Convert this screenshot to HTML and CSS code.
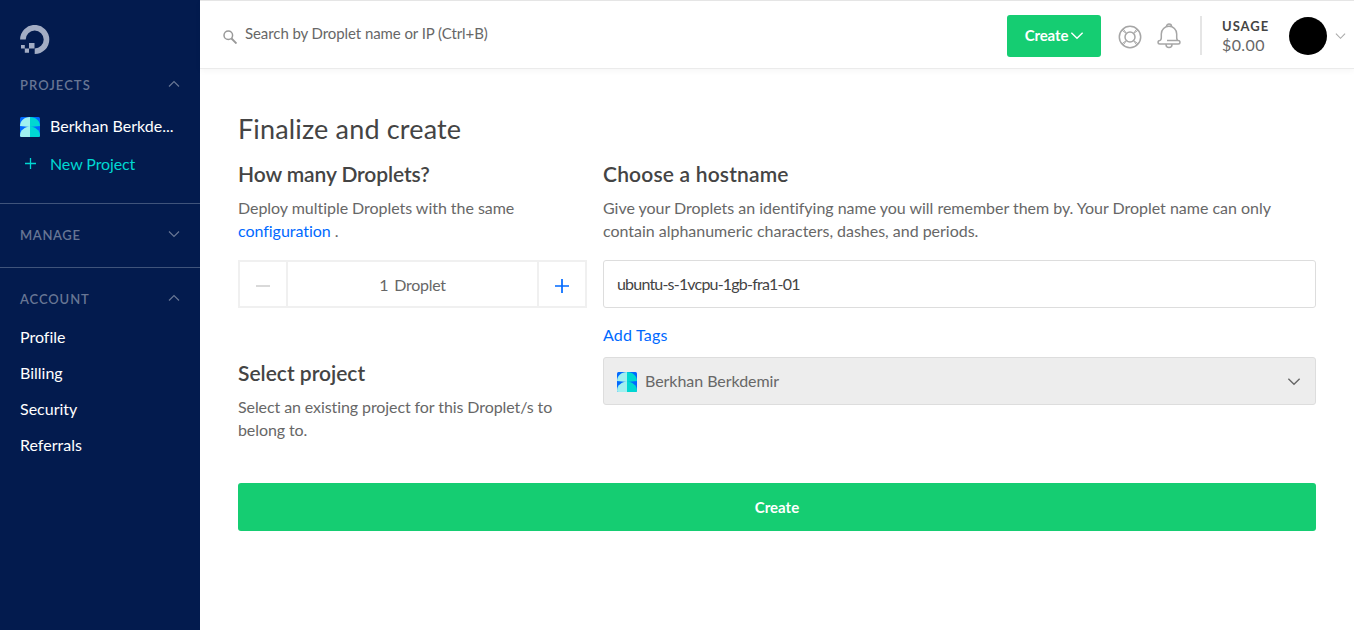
FILE: index.html
```html
<!DOCTYPE html>
<html lang="en">
<head>
<meta charset="utf-8">
<title>Create Droplets</title>
<link rel="stylesheet" href="styles.css">
</head>
<body>
<svg class="defs" aria-hidden="true">
  <symbol id="project" viewBox="0 0 20 20">
    <rect width="20" height="20" rx="1.5" fill="#0069ff"/>
    <path d="M10 0C4 0 0 4 0 9l10 1z" fill="#a0f0f0"/>
    <path d="M10 0c6 0 10 4 10 9l-10 1z" fill="#00d7d2"/>
    <path d="M10 9.500C5 10 0 13 0 18.500Q0 20 1.500 20H10z" fill="#a0f0f0"/>
    <path d="M10 9.500c5 .5 10 3.500 10 9q0 1.500-1.500 1.500H10z" fill="#00d7d2"/>
  </symbol>
  <symbol id="chevron" viewBox="0 0 12 8">
    <path d="M1 1.500l5 5 5-5" fill="none" stroke="currentColor" stroke-width="1.200"/>
  </symbol>
</svg>
<div class="app">
  <nav class="sidebar">
    <svg class="logo" viewBox="0 0 30 30">
      <path d="M2.900 14.500A11.800 11.800 0 1 1 14.700 26.300" fill="none" stroke="#a3adc4" stroke-width="5.600"/>
      <path d="M9 18h5.500v5.500H9zM4.800 23.500H9v4.200H4.800zM1 20h3.800v3.500H1z" fill="#a3adc4"/>
    </svg>
    <div class="group projects">
      <div class="group-head"><span class="t-projects">PROJECTS</span><svg class="chev up"><use href="#chevron"/></svg></div>
      <a class="project"><svg class="project-icon"><use href="#project"/></svg><span class="t-name">Berkhan Berkde...</span></a>
      <a class="project new"><svg class="plus" viewBox="0 0 20 20"><path d="M10.500 5v11M5 10.500h11" stroke="currentColor" stroke-width="1.300"/></svg><span class="t-new">New Project</span></a>
    </div>
    <div class="group manage">
      <div class="group-head"><span class="t-manage">MANAGE</span><svg class="chev"><use href="#chevron"/></svg></div>
    </div>
    <div class="group account">
      <div class="group-head"><span class="t-account">ACCOUNT</span><svg class="chev up"><use href="#chevron"/></svg></div>
      <a class="link">Profile</a>
      <a class="link">Billing</a>
      <a class="link">Security</a>
      <a class="link">Referrals</a>
    </div>
  </nav>
  <div class="page">
    <header class="topbar">
      <svg class="search-icon" viewBox="0 0 14 14"><circle cx="5.300" cy="5.300" r="4.300" fill="none" stroke="#999" stroke-width="1.500"/><path d="M8.500 8.500l5 5" stroke="#999" stroke-width="1.900"/></svg>
      <span class="search">Search by Droplet name or IP (Ctrl+B)</span>
      <button class="create-menu"><span>Create</span><svg class="menu-chev"><use href="#chevron"/></svg></button>
      <svg class="help" viewBox="0 0 24 24" fill="none" stroke="#a6a6a6" stroke-width="1.500"><circle cx="12" cy="12" r="10.700"/><circle cx="12" cy="12" r="5"/><path d="M4 5.200l4.200 3.200M5.200 4l3.200 4.200M20 5.200l-4.200 3.200M18.800 4l-3.200 4.200M4 18.800l4.200-3.200M5.200 20l3.200-4.200M20 18.800l-4.200-3.200M18.800 20l-3.200-4.200" stroke-width="1"/></svg>
      <svg class="bell" viewBox="0 0 24 26" fill="none" stroke="#a6a6a6" stroke-width="1.500"><path d="M9.500 3.500a2.500 2.500 0 0 1 5 0M10 17.500h11.200a1.700 1.700 0 0 1 0 3.500H2.800a1.700 1.700 0 0 1 0-3.500q1.500-.3 1.500-3v-3.500a7.700 7.700 0 0 1 15.400 0v3.500q0 2.700 1.500 3M9 21.500a3 3 0 0 0 6 0"/></svg>
      <div class="usage"><span class="usage-label">USAGE</span><span class="usage-value">$0.00</span></div>
      <span class="avatar"></span>
      <svg class="user-chev"><use href="#chevron"/></svg>
    </header>
    <main class="content">
      <h1>Finalize and create</h1>
      <div class="columns">
        <section class="left">
          <h2 class="t-how">How many Droplets?</h2>
          <p class="t-deploy">Deploy multiple Droplets with the same<br><a class="blue">configuration</a> .</p>
          <div class="stepper">
            <span class="step minus"><svg viewBox="0 0 14 14"><path d="M0 7h14" stroke="currentColor" stroke-width="1.500"/></svg></span>
            <span class="count"><span>1</span><span>Droplet</span></span>
            <span class="step add"><svg viewBox="0 0 14 14"><path d="M0 7h14M7 0v14" stroke="currentColor" stroke-width="1.700"/></svg></span>
          </div>
          <h2 class="t-select">Select project</h2>
          <p class="t-existing">Select an existing project for this Droplet/s to<br>belong to.</p>
        </section>
        <section class="right">
          <h2 class="t-host">Choose a hostname</h2>
          <p class="t-give">Give your Droplets an identifying name you will remember them by. Your Droplet name can only<br>contain alphanumeric characters, dashes, and periods.</p>
          <div class="field">ubuntu-s-1vcpu-1gb-fra1-01</div>
          <a class="tags blue">Add Tags</a>
          <div class="select"><svg class="project-icon"><use href="#project"/></svg><span class="select-name">Berkhan Berkdemir</span><svg class="select-chev"><use href="#chevron"/></svg></div>
        </section>
      </div>
      <button class="create">Create</button>
    </main>
  </div>
</div>
</body>
</html>
```
FILE: styles.css
```css
* { box-sizing: border-box; }
body {
  margin: 0;
  font: 16px/23px Lato, "Open Sans", sans-serif;
  font-variant-ligatures: none;
  color: #676767;
  background: #fff;
}
h1, h2, p { margin: 0; }
svg { display: block; flex: none; }
button { border: 0; padding: 0; font: inherit; }
.defs { position: absolute; width: 0; height: 0; }
.app { display: flex; height: 630px; overflow: hidden; white-space: nowrap; }

.sidebar { width: 200px; flex: none; background: #031b4e; color: #fff; }
.logo { width: 30px; height: 30px; margin: 25px 0 0 20px; }
.group { padding: 0 20px; }
.group-head {
  display: flex;
  align-items: center;
  justify-content: space-between;
  height: 20px;
  font-size: 13px;
  font-weight: 600;
  color: #687694;
}
.group-head span { padding-top: 2px; }
.t-projects { letter-spacing: 1.05px; }
.t-manage { letter-spacing: .65px; }
.t-account { letter-spacing: .9px; }
.chev { width: 12px; height: 8px; }
.up { transform: rotate(180deg); }
.projects { height: 148px; padding-top: 19px; }
.project { display: flex; align-items: center; gap: 10px; height: 38px; }
.project span { margin-top: -3px; }
.t-new { letter-spacing: -.1px; }
.projects .group-head { margin-bottom: 14px; }
.project-icon, .plus { width: 20px; height: 20px; }
.new { color: #00d7d2; }
.plus { margin-top: -4px; }
.manage { height: 64px; padding-top: 20px; border-top: 1px solid #40547b; }
.account { padding-top: 20px; border-top: 1px solid #40547b; }
.account .group-head { margin-bottom: 10px; }
.link { display: flex; align-items: center; height: 36px; }

.page { flex: 1; min-width: 0; }
.topbar {
  display: flex;
  align-items: center;
  height: 69px;
  padding: 2px 0 0 23px;
  border-top: 1px solid #e5e5e5;
  border-bottom: 1px solid #ebebeb;
  box-shadow: 0 2px 6px rgba(0, 0, 0, .04);
}
.search-icon { width: 14px; height: 14px; margin: 2px 8px 0 0; }
.search { width: 762px; font-size: 15px; letter-spacing: -.08px; margin-top: -5px; }
.create-menu {
  display: flex;
  align-items: center;
  justify-content: center;
  gap: 2px;
  width: 94px;
  height: 42px;
  padding-left: 1px;
  border-radius: 3px;
  background: #15cd72;
  color: #fff;
  font-size: 15px;
  font-weight: 700;
  letter-spacing: -.1px;
}
.menu-chev { width: 14px; height: 9px; }
.help { width: 24px; height: 24px; margin: 2px 0 0 17px; }
.bell { width: 24px; height: 26px; margin: 1px 0 0 15px; }
.usage {
  display: flex;
  flex-direction: column;
  width: 89px;
  height: 39px;
  margin-left: 19px;
  padding-left: 20px;
  border-left: 2px solid #e5e5e5;
}
.usage-label { padding-top: 1px; font-size: 13px; font-weight: 700; letter-spacing: 1px; line-height: 19px; color: #444; }
.usage-value { line-height: 19px; letter-spacing: .4px; margin-top: -1px; }
.avatar { width: 38px; height: 38px; border-radius: 50%; background: #000; }
.user-chev { width: 11px; height: 8px; margin-left: 8px; color: #aaa; }

.content { padding: 43px 38px 0; }
h1 { font-size: 27px; line-height: 34px; font-weight: 400; letter-spacing: .16px; color: #444; }
h2 { font-size: 21px; line-height: 30px; font-weight: 600; color: #444; }
.t-how { letter-spacing: -.1px; }
.t-host { letter-spacing: .18px; }
.t-deploy { letter-spacing: -.04px; }
.t-give { letter-spacing: -.02px; }
.t-existing { letter-spacing: -.09px; }
.columns { display: flex; gap: 16px; height: 324px; margin-top: 13px; }
.left { width: 349px; }
.right { width: 713px; }
h2 + p { margin-top: 7px; }
.blue { color: #0069ff; }
.stepper { display: flex; height: 48px; margin-top: 18px; border: 2px solid #f0f0f0; }
.step { display: flex; align-items: center; justify-content: center; width: 48px; }
.step svg { width: 14px; height: 14px; margin-top: 4px; }
.minus { color: #ccc; border-right: 2px solid #f0f0f0; }
.add { color: #0069ff; border-left: 2px solid #f0f0f0; }
.count { display: flex; align-items: center; justify-content: center; gap: 6px; flex: 1; letter-spacing: -.25px; padding-top: 1px; }
.t-select { margin-top: 50px; }
.field {
  height: 48px;
  margin-top: 18px;
  padding: 0 13px;
  border: 1px solid #ddd;
  border-radius: 3px;
  line-height: 45px;
  letter-spacing: -.8px;
  color: #444;
}
.tags { display: block; margin-top: 15px; letter-spacing: .2px; }
.select {
  display: flex;
  align-items: center;
  gap: 8px;
  height: 48px;
  margin-top: 11px;
  padding: 0 14px 0 13px;
  border: 1px solid #ddd;
  border-radius: 3px;
  background: #ededed;
}
.select .project-icon { margin-top: 2px; }
.select-name { margin-top: -1px; letter-spacing: -.05px; }
.select-chev { width: 14px; height: 9px; margin-left: auto; }
.create {
  display: block;
  width: 100%;
  height: 48px;
  border-radius: 3px;
  background: #15cd72;
  color: #fff;
  font-size: 15px;
  font-weight: 700;
}
```
